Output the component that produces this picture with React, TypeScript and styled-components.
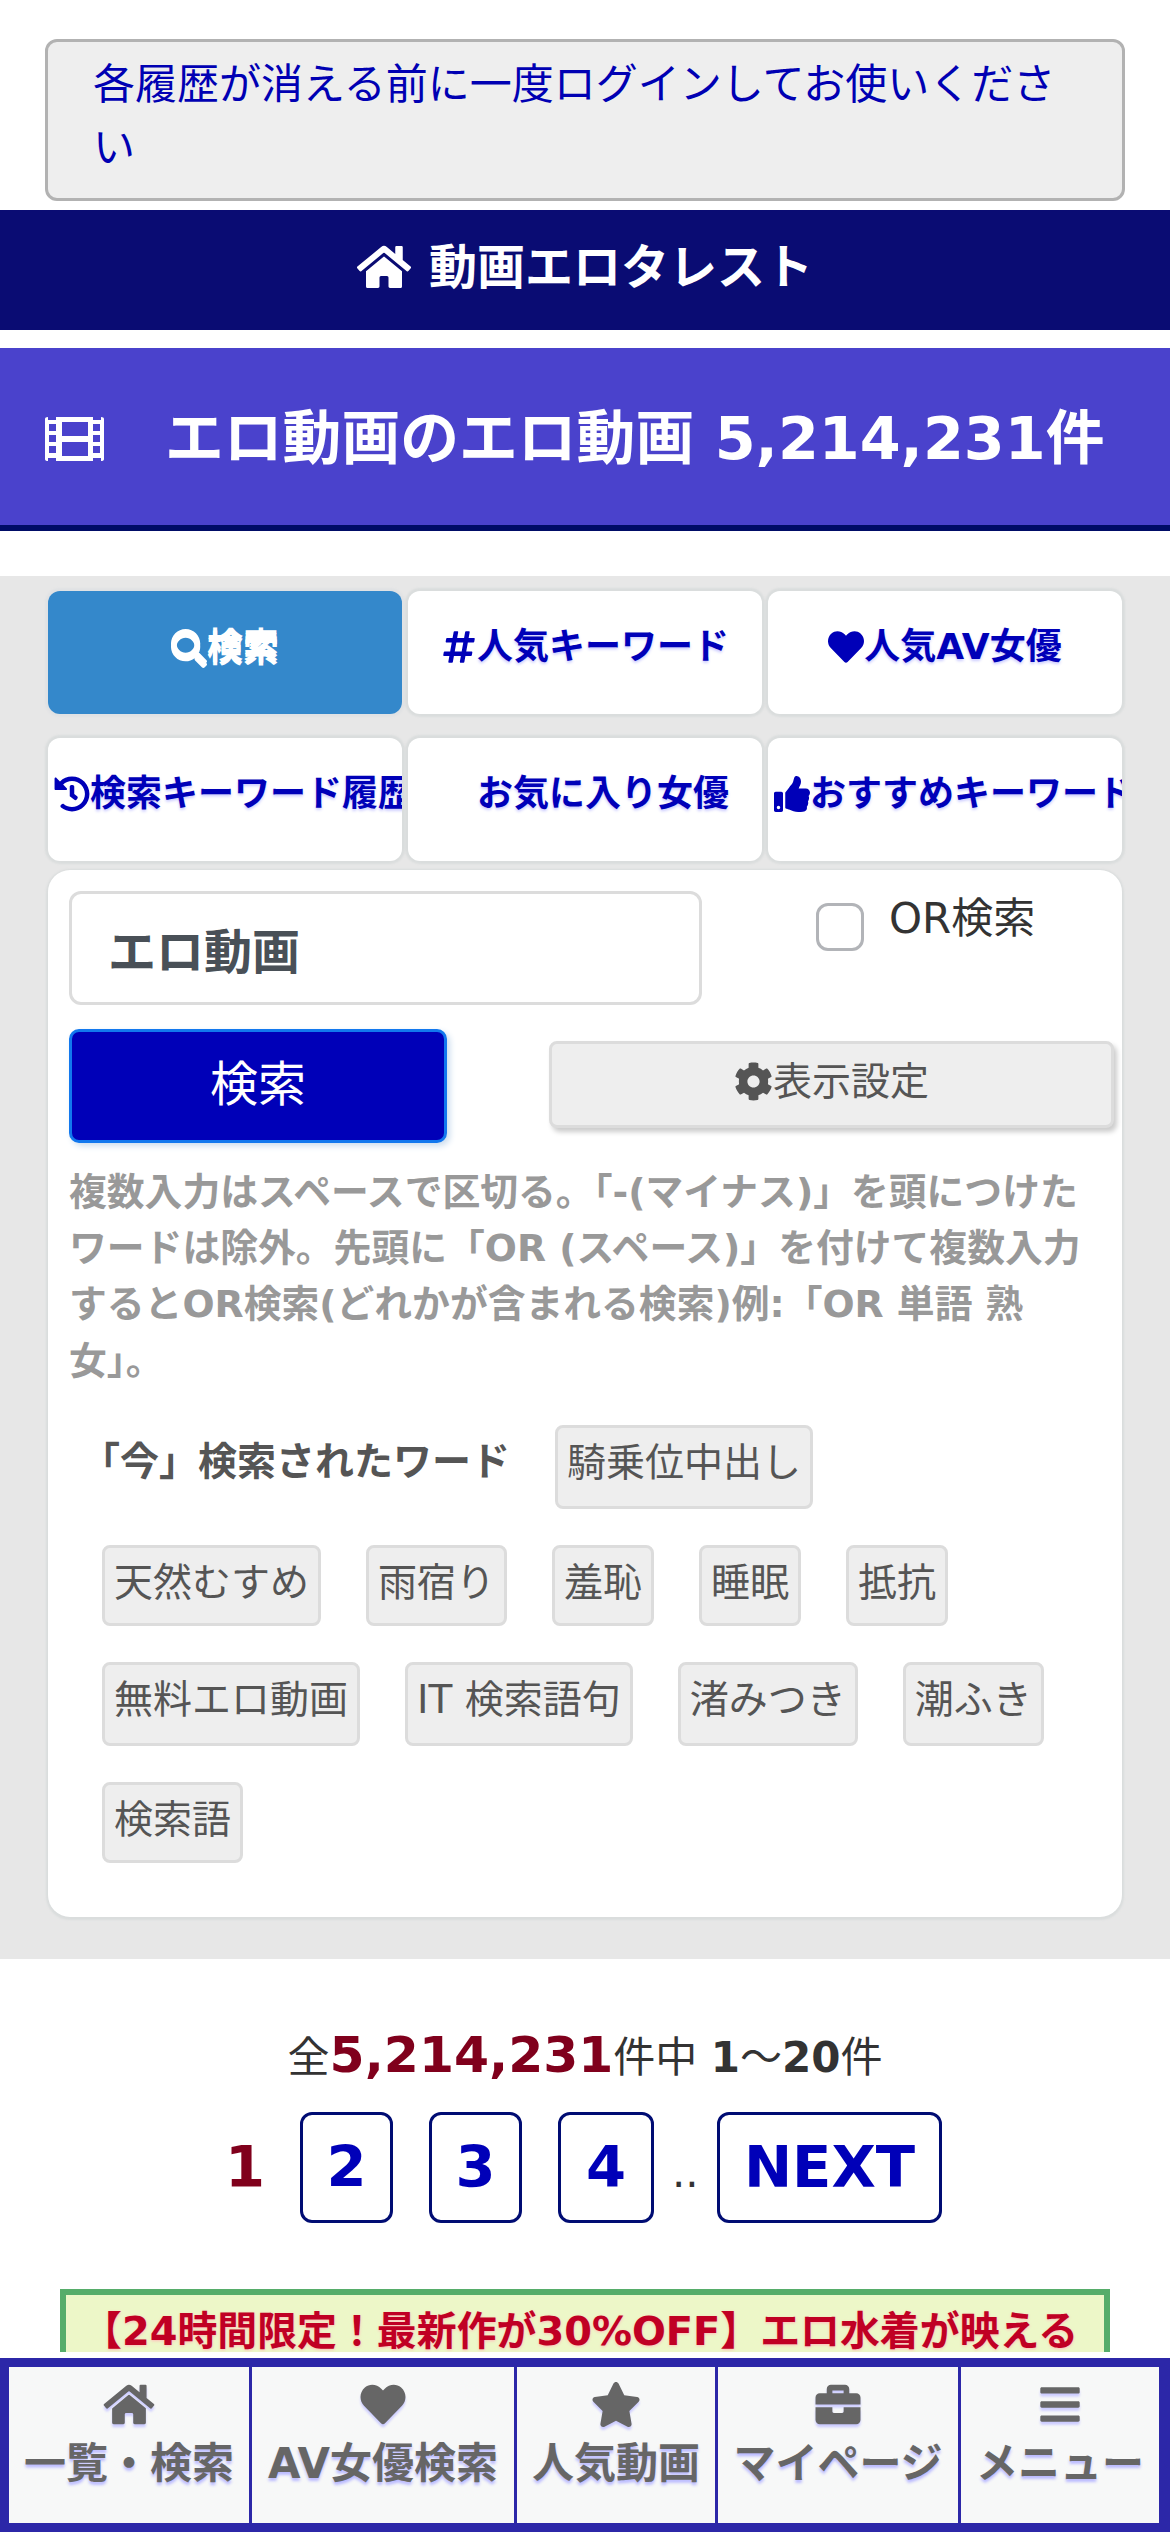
import React from "react";
import styled, { createGlobalStyle } from "styled-components";
import {
  FaHome, FaSearch, FaHashtag, FaHeart, FaHistory, FaThumbsUp, FaCog, FaStar, FaBriefcase, FaBars,
} from "react-icons/fa";

const GlobalStyle = createGlobalStyle`
  * { box-sizing: border-box; }
  html, body { margin: 0; background: #fff; }
  body {
    height: 2532px;
    overflow: hidden;
    color: #333;
    font-family: "DejaVu Sans", "Noto Sans CJK JP", sans-serif;
  }
`;

const Page = styled.div`
  display: flex;
  flex-direction: column;
  width: 1170px;
  height: 2532px;
  overflow: hidden;
`;

const Notice = styled.a`
  flex: none;
  height: 162px;
  margin: 39px 45px 0;
  padding: 11px 30px 0 45px;
  border: 3px solid #b2b2b2;
  border-radius: 12px;
  background: #eee;
  color: #0000b3;
  font-size: 42px;
  line-height: 63px;
`;

const SiteHeader = styled.header`
  flex: none;
  display: flex;
  justify-content: center;
  align-items: center;
  gap: 18px;
  height: 120px;
  margin-top: 9px;
  padding-bottom: 6px;
  background: #0a0c73;
  color: #fff;
  font-size: 48px;
  font-weight: bold;
  line-height: 60px;
  svg { width: 54px; height: 48px; }
`;

const TitleBar = styled.h1`
  flex: none;
  display: flex;
  align-items: center;
  height: 183px;
  margin: 18px 0 0;
  padding: 5px 0 0 45px;
  border-bottom: 6px solid #000c66;
  background: #4a42cc;
  color: #fff;
  font-size: 58.8px;
  line-height: 80px;
  white-space: nowrap;
  svg { width: 59px; height: 44px; margin-right: 61px; }
`;

const SearchSection = styled.section`
  flex: none;
  height: 1383px;
  margin-top: 45px;
  padding: 15px 48px 0;
  background: #e7e7e7;
`;

const Tabs = styled.div`
  display: grid;
  grid-template-columns: repeat(3, 354px);
  gap: 24px 6px;
`;

const Tab = styled.button<{ $active?: boolean; $clip?: boolean }>`
  display: flex;
  justify-content: ${(p) => (p.$clip ? "flex-start" : "center")};
  align-items: center;
  height: 123px;
  padding: 0 6px 12px;
  overflow: hidden;
  border: 0;
  border-radius: 12px;
  background: ${(p) => (p.$active ? "#3488cb" : "#fff")};
  box-shadow: 0 0 2px 3px ${(p) => (p.$active ? "#e0e2e4" : "#dadddd")};
  color: ${(p) => (p.$active ? "#fff" : "#0000b8")};
  font: bold 36px/54px "DejaVu Sans", "Noto Sans CJK JP", sans-serif;
  text-shadow: ${(p) => (p.$active ? "0 3px 0 #fff" : "0 2px 3px #ccf")};
  white-space: nowrap;
  svg {
    flex: none;
    width: 36px;
    height: 36px;
    filter: ${(p) => (p.$active ? "drop-shadow(0 3px 0 #fff)" : "none")};
  }
`;

const IconSpace = styled.span`
  width: 36px;
`;

const Panel = styled.div`
  height: 1047px;
  margin-top: 9px;
  padding: 21px 0 21px 21px;
  border-radius: 22px;
  background: #fff;
  box-shadow: 0 1px 2px 2px #dadddd;
`;

const FormRow = styled.div`
  display: flex;
  align-items: flex-start;
`;

const QueryInput = styled.input`
  width: 633px;
  height: 114px;
  padding: 0 36px;
  border: 3px solid #dcdcdc;
  border-radius: 12px;
  background: #fff;
  color: #495057;
  font: bold 48px/72px "DejaVu Sans", "Noto Sans CJK JP", sans-serif;
`;

const OrLabel = styled.label`
  display: flex;
  margin-left: 114px;
  font-size: 42px;
  line-height: 55px;
`;

const Checkbox = styled.input`
  appearance: none;
  width: 48px;
  height: 48px;
  margin: 12px 25px 0 0;
  border: 3px solid #b2b4b8;
  border-radius: 12px;
  background: #fff;
`;

const ButtonRow = styled.div`
  display: flex;
  align-items: flex-start;
  margin-top: 24px;
`;

const SubmitButton = styled.button`
  flex: none;
  width: 378px;
  height: 114px;
  padding: 0 0 5px;
  border: 3px solid #1278ee;
  border-radius: 10px;
  background: #0000b8;
  box-shadow: 3px 3px 6px #cde;
  color: #fff;
  font: 48px/72px "DejaVu Sans", "Noto Sans CJK JP", sans-serif;
`;

const SettingsButton = styled.button`
  flex: none;
  display: flex;
  justify-content: center;
  align-items: center;
  width: 565px;
  height: 87px;
  margin: 12px 0 0 102px;
  padding: 0 0 6px;
  border: 3px solid #dcdcdc;
  border-radius: 8px;
  background: #eee;
  box-shadow: 3px 4px 5px #ccc;
  color: #555;
  font: 39px/58px "DejaVu Sans", "Noto Sans CJK JP", sans-serif;
  svg { width: 39px; height: 39px; }
`;

const Help = styled.p`
  margin: 21px 0 0;
  color: #999;
  font-size: 37.8px;
  font-weight: bold;
  line-height: 56.2px;
  white-space: nowrap;
`;

const Keywords = styled.div`
  display: flex;
  flex-direction: column;
  gap: 36px;
  margin: 36px 0 0 33px;
`;

const KeywordRow = styled.div`
  display: flex;
  align-items: flex-start;
  gap: 45px;
`;

const KeywordTitle = styled.b`
  margin-left: -21px;
  color: #555;
  font-size: 39px;
  line-height: 74px;
  white-space: nowrap;
`;

const Keyword = styled.a<{ $tall?: boolean }>`
  height: ${(p) => (p.$tall ? 84 : 81)}px;
  padding: 5px 9px 0;
  border: 3px solid #dcdcdc;
  border-radius: 8px;
  background: #eee;
  color: #555;
  font-size: 39px;
  line-height: 59px;
  white-space: nowrap;
`;

const Count = styled.p`
  margin: 60px 0 0;
  font-size: 42px;
  line-height: 72px;
  text-align: center;
  white-space: nowrap;
`;

const Total = styled.b`
  color: #80001c;
  font-size: 50.4px;
`;

const Tilde = styled.span`
  font-weight: normal;
`;

const Pager = styled.nav`
  flex: none;
  display: flex;
  align-items: center;
  height: 111px;
  margin: 18px 0 0 225px;
`;

const CurrentPage = styled.b`
  width: 75px;
  color: #80001c;
  font-size: 57.6px;
  line-height: 105px;
`;

const PageLink = styled.a<{ $width: number }>`
  width: ${(p) => p.$width}px;
  height: 111px;
  margin-right: 36px;
  border: 3px solid #000c73;
  border-radius: 12px;
  color: #0000b8;
  font-size: 57.6px;
  font-weight: bold;
  line-height: 105px;
  text-align: center;
`;

const Dots = styled.span`
  width: 45px;
  margin-left: -18px;
  padding-top: 10px;
  font-size: 42px;
`;

const Banner = styled.a`
  flex: none;
  height: 63px;
  margin: 66px 60px 0;
  padding: 6px 0 0 16px;
  overflow: hidden;
  border: 6px solid #56ad6a;
  border-bottom: 0;
  background: #edf7c8;
  color: #c00024;
  font-size: 39.9px;
  font-weight: bold;
  line-height: 60px;
  text-shadow: 0 1px 3px #fbb;
  white-space: nowrap;
`;

const BottomNav = styled.nav`
  flex: none;
  display: grid;
  grid-template-columns: 240px 262px 198px 240px 198px;
  column-gap: 3px;
  height: 174px;
  margin-top: 6px;
  border: 9px solid #2c27a8;
  border-right-width: 11px;
  background: #2c27a8;
`;

const NavItem = styled.a`
  display: flex;
  flex-direction: column;
  align-items: center;
  padding-top: 15px;
  background: #f7f8f8;
  color: #666;
  font-size: 42px;
  font-weight: bold;
  line-height: 62px;
  text-shadow: 0 3px 3px #bbf;
  white-space: nowrap;
  svg {
    flex: none;
    width: 52px;
    height: 45px;
    margin-bottom: 6px;
    filter: drop-shadow(0 3px 1px #ccf);
  }
`;

const FilmIcon = () => (
  <svg viewBox="0 0 59 44" fill="currentColor" fillRule="evenodd">
    <path d="M0 2Q0 0 3 0V3H11V0H48V3H56V0Q59 0 59 2V42Q59 44 56 44V41H48V44H11V41H3V44Q0 44 0 42ZM4 7V14H11V7ZM4 18V25H11V18ZM4 29V36H11V29ZM48 7V14H55V7ZM48 18V25H55V18ZM48 29V36H55V29ZM17 5V19H43V5ZM17 25V39H43V25Z" />
  </svg>
);

const keywordRows = [
  { tall: false, words: ["天然むすめ", "雨宿り", "羞恥", "睡眠", "抵抗"] },
  { tall: true, words: ["無料エロ動画", "IT 検索語句", "渚みつき", "潮ふき"] },
  { tall: false, words: ["検索語"] },
];

const navItems = [
  { icon: <FaHome />, label: "一覧・検索" },
  { icon: <FaHeart />, label: "AV女優検索" },
  { icon: <FaStar />, label: "人気動画" },
  { icon: <FaBriefcase />, label: "マイページ" },
  { icon: <FaBars />, label: "メニュー" },
];

export default function App() {
  return (
    <Page lang="ja">
      <GlobalStyle />
      <Notice>各履歴が消える前に一度ログインしてお使いくださ<br />い</Notice>
      <SiteHeader><FaHome />動画エロタレスト</SiteHeader>
      <TitleBar><FilmIcon />エロ動画のエロ動画 5,214,231件</TitleBar>
      <SearchSection>
        <Tabs>
          <Tab $active><FaSearch />検索</Tab>
          <Tab><FaHashtag />人気キーワード</Tab>
          <Tab><FaHeart />人気AV女優</Tab>
          <Tab $clip><FaHistory />検索キーワード履歴</Tab>
          <Tab><IconSpace />お気に入り女優</Tab>
          <Tab $clip><FaThumbsUp />おすすめキーワード</Tab>
        </Tabs>
        <Panel>
          <FormRow>
            <QueryInput defaultValue="エロ動画" />
            <OrLabel><Checkbox type="checkbox" />OR検索</OrLabel>
          </FormRow>
          <ButtonRow>
            <SubmitButton>検索</SubmitButton>
            <SettingsButton><FaCog />表示設定</SettingsButton>
          </ButtonRow>
          <Help>
            複数入力はスペースで区切る。「-(マイナス)」を頭につけた<br />
            ワードは除外。先頭に「OR (スペース)」を付けて複数入力<br />
            するとOR検索(どれかが含まれる検索)例:「OR 単語 熟<br />
            女」。
          </Help>
          <Keywords>
            <KeywordRow>
              <KeywordTitle>「今」検索されたワード</KeywordTitle>
              <Keyword $tall>騎乗位中出し</Keyword>
            </KeywordRow>
            {keywordRows.map((row) => (
              <KeywordRow key={row.words[0]}>
                {row.words.map((word) => (
                  <Keyword key={word} $tall={row.tall}>{word}</Keyword>
                ))}
              </KeywordRow>
            ))}
          </Keywords>
        </Panel>
      </SearchSection>
      <Count>全<Total>5,214,231</Total>件中 <b>1<Tilde>〜</Tilde>20</b>件</Count>
      <Pager>
        <CurrentPage>1</CurrentPage>
        <PageLink $width={93}>2</PageLink>
        <PageLink $width={93}>3</PageLink>
        <PageLink $width={96}>4</PageLink>
        <Dots>..</Dots>
        <PageLink $width={225}>NEXT</PageLink>
      </Pager>
      <Banner>【24時間限定！最新作が30%OFF】エロ水着が映える</Banner>
      <BottomNav>
        {navItems.map((item) => (
          <NavItem key={item.label}>{item.icon}{item.label}</NavItem>
        ))}
      </BottomNav>
    </Page>
  );
}
